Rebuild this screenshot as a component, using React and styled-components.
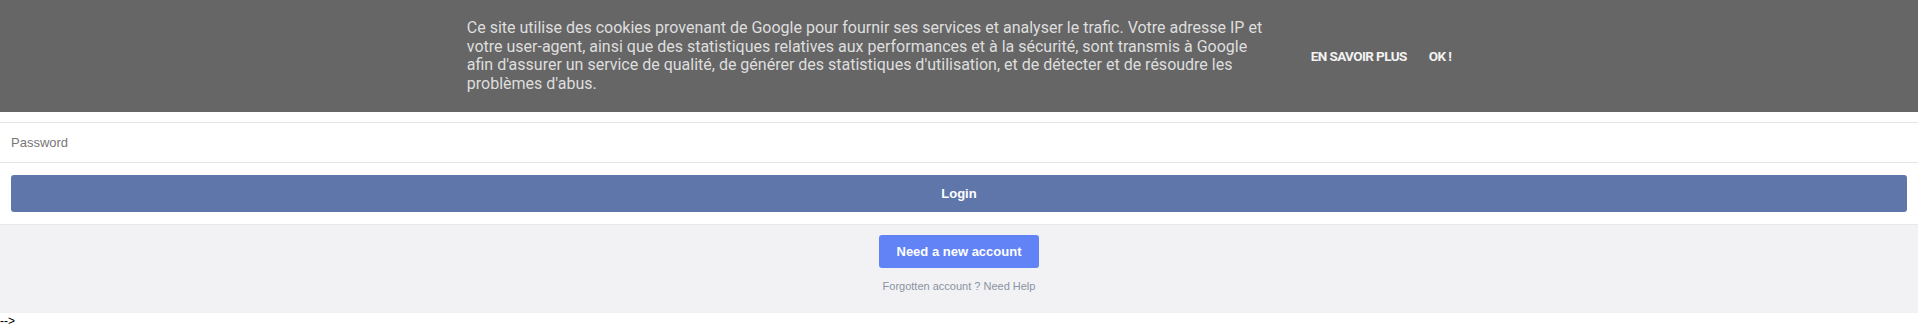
import React from 'react';
import styled, { createGlobalStyle } from 'styled-components';

const Global = createGlobalStyle`
  html, body { margin:0; padding:0; background:#fff; }
  body { font-family:"Liberation Sans", Arial, sans-serif; font-size:12px; color:#000; }
`

const CookieBar = styled.div`
  position:fixed; top:0; left:0; right:0; z-index:255;
  background:#666;
  display:flex; justify-content:center; align-items:center;
  gap:44px;
  padding:19px 0;
  font-family:Roboto, "Liberation Sans", sans-serif;
`

const CookieText = styled.p`
  margin:0;
  width:800px;
  font-size:16px; line-height:18.5px;
  color:#dedede;
`

const CookieButtons = styled.div`
  display:flex; gap:22px; align-items:center;
`

const CookieButton = styled.a`
  font-size:13.5px; font-weight:bold; letter-spacing:-0.6px;
  text-transform:uppercase; white-space:nowrap;
  color:#f2f2f2; text-decoration:none; cursor:pointer;
`

const Form = styled.form`
  display:flex; flex-direction:column;
  padding-top:82px;
`

const Field = styled.input`
  box-sizing:border-box;
  height:${p => (p.$last ? '41px' : '40px')};
  margin:0; padding:0 11px;
  border:0; border-top:1px solid #e5e5e5;
  border-bottom:${p => (p.$last ? '1px solid #e5e5e5' : '0')};
  font-family:"Liberation Sans", Arial, sans-serif; font-size:13px;
  color:#333; outline:none;
  &::placeholder { color:#777; }
`

const LoginButton = styled.button`
  margin:12px 11px;
  height:37px;
  border:0; border-radius:3px;
  background:#5e76a9; color:#fff;
  font-family:"Liberation Sans", Arial, sans-serif; font-size:13px; font-weight:bold;
  cursor:pointer;
`

const Footer = styled.div`
  display:flex; flex-direction:column; align-items:center;
  height:89px; box-sizing:border-box;
  padding-top:10px;
  background:#f2f2f4;
  border-top:1px solid #e8e8ea;
`

const NewAccount = styled.a`
  display:flex; align-items:center; justify-content:center;
  width:160px; height:33px; box-sizing:border-box;
  border-radius:3px;
  background:#6283f6; color:#fff;
  font-size:13px; font-weight:bold; text-decoration:none;
`

const HelpLine = styled.div`
  margin-top:12px;
  font-size:11px; color:#8a93a3;
`

const Stray = styled.div`
  font-size:12px; line-height:17px;
`

const App = () => {
  return (
    <>
      <Global />
      <CookieBar>
        <CookieText>
          Ce site utilise des cookies provenant de Google pour fournir ses services et analyser le trafic. Votre adresse IP et votre user-agent, ainsi que des statistiques relatives aux performances et à la sécurité, sont transmis à Google afin d'assurer un service de qualité, de générer des statistiques d'utilisation, et de détecter et de résoudre les problèmes d'abus.
        </CookieText>
        <CookieButtons>
          <CookieButton>En savoir plus</CookieButton>
          <CookieButton>Ok !</CookieButton>
        </CookieButtons>
      </CookieBar>

      <Form onSubmit={e => e.preventDefault()}>
        <Field type="text" placeholder="Mobile number or email" />
        <Field type="password" placeholder="Password" $last />
        <LoginButton type="submit">Login</LoginButton>
      </Form>

      <Footer>
        <NewAccount>Need a new account</NewAccount>
        <HelpLine>Forgotten account ? Need Help</HelpLine>
      </Footer>
      <Stray>--&gt;</Stray>
    </>
  );
};

export default App;
